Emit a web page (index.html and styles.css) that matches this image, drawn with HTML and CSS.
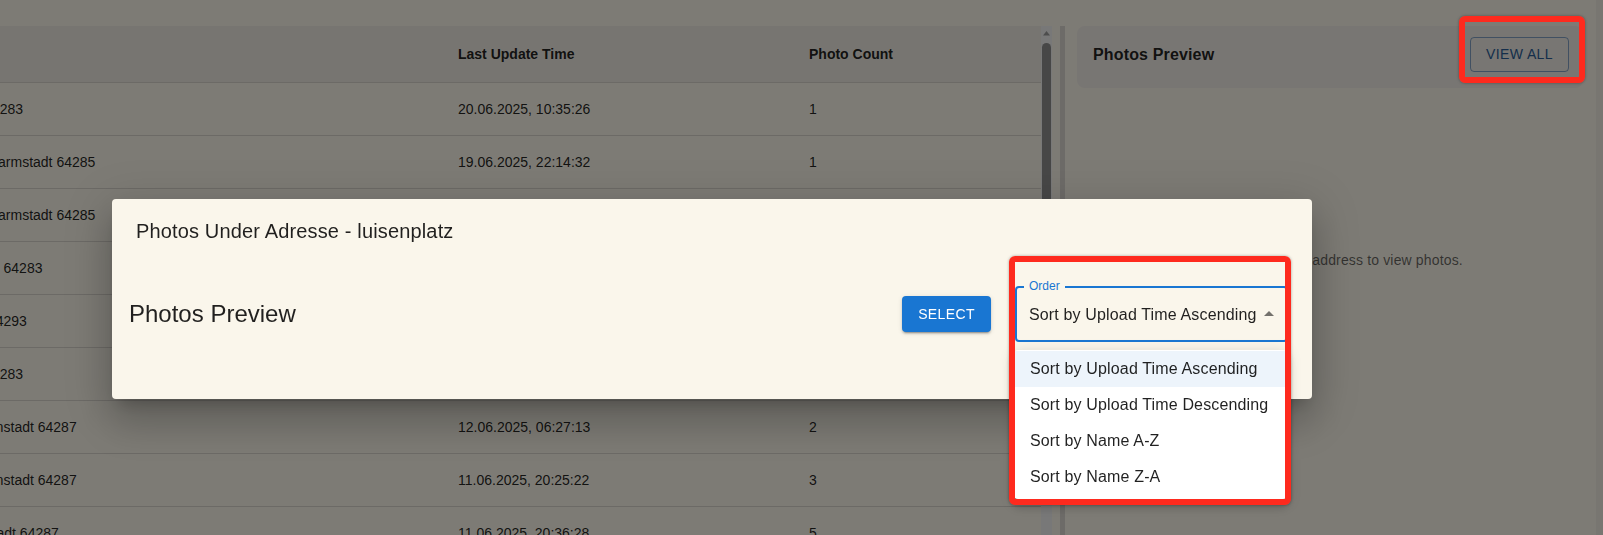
FILE: index.html
```html
<!DOCTYPE html>
<html lang="de">
<head>
<meta charset="utf-8">
<title>Photos</title>
<link rel="stylesheet" href="styles.css">
</head>
<body>
<div class="app">
  <section class="table-pane">
    <div class="table-viewport">
      <table class="addr-table">
        <thead>
          <tr><th class="c-addr">Address</th><th class="c-time">Last Update Time</th><th>Photo Count</th></tr>
        </thead>
        <tbody>
          <tr><td>Luisenplatz, Darmstadt 64283</td><td>20.06.2025, 10:35:26</td><td>1</td></tr>
          <tr><td>Heinrich-Fuhr-Straße 2, Darmstadt 64285</td><td>19.06.2025, 22:14:32</td><td>1</td></tr>
          <tr><td>Heinrich-Fuhr-Straße 4, Darmstadt 64285</td><td>18.06.2025, 16:02:47</td><td>4</td></tr>
          <tr><td>Luisenplatz 12, Darmstadt 64283</td><td>16.06.2025, 09:11:05</td><td>1</td></tr>
          <tr><td>Mainzer Str., Darmstadt 64293</td><td>14.06.2025, 13:48:50</td><td>2</td></tr>
          <tr><td>Luisenplatz, Darmstadt 64283</td><td>13.06.2025, 17:20:39</td><td>1</td></tr>
          <tr><td>Lichtenbergstraße 3, Darmstadt 64287</td><td>12.06.2025, 06:27:13</td><td>2</td></tr>
          <tr><td>Lichtenbergstraße 3, Darmstadt 64287</td><td>11.06.2025, 20:25:22</td><td>3</td></tr>
          <tr><td>Kasinostraße 1-3, Darmstadt 64287</td><td>11.06.2025, 20:36:28</td><td>5</td></tr>
        </tbody>
      </table>
    </div>
    <div class="vscroll">
      <svg class="vscroll-arrow" width="11" height="8" viewBox="0 0 11 8"><path d="M2 6.5 L5.5 2 L9 6.5 Z" fill="#9a9a9a"/></svg>
      <div class="vscroll-thumb"></div>
    </div>
  </section>
  <div class="pane-divider"></div>
  <section class="preview-pane">
    <div class="preview-card">
      <h2 class="preview-title">Photos Preview</h2>
      <button class="btn btn-outlined">View all</button>
    </div>
    <p class="empty-msg">Please select an address to view photos.</p>
  </section>
  <div class="page-scroll"></div>
</div>

<div class="backdrop"></div>

<div class="dialog" role="dialog">
  <h2 class="dialog-title">Photos Under Adresse - luisenplatz</h2>
  <div class="dialog-content">
    <div class="dialog-toolbar">
      <h3 class="dialog-subtitle">Photos Preview</h3>
      <button class="btn btn-contained">Select</button>
      <div class="select-field">
        <span class="select-label">Order</span>
        <span class="select-value">Sort by Upload Time Ascending</span>
        <svg class="select-icon" width="24" height="24" viewBox="0 0 24 24"><path d="M7 14l5-5 5 5z" fill="rgba(0,0,0,0.54)"/></svg>
      </div>
    </div>
  </div>
</div>

<ul class="menu" role="listbox">
  <li class="menu-item selected">Sort by Upload Time Ascending</li>
  <li class="menu-item">Sort by Upload Time Descending</li>
  <li class="menu-item">Sort by Name A-Z</li>
  <li class="menu-item">Sort by Name Z-A</li>
</ul>

<div class="annot annot-select"></div>
<div class="annot annot-viewall"></div>
</body>
</html>
```

FILE: styles.css
```css
* { box-sizing: border-box; }

html, body {
  margin: 0;
  padding: 0;
  width: 1603px;
  height: 535px;
  overflow: hidden;
}

body {
  background: #faf6ea;
  font-family: "Liberation Sans", Arial, sans-serif;
  color: rgba(0, 0, 0, 0.87);
  position: relative;
}

.app {
  display: flex;
  height: 535px;
  padding-top: 26px;
}

/* ---------- table ---------- */
.table-pane {
  display: flex;
  width: 1052px;
  flex: none;
}

.table-viewport {
  width: 1041px;
  overflow: hidden;
}

.addr-table {
  border-collapse: collapse;
  margin-left: -179px;
  width: 1220px;
  font-size: 14px;
  table-layout: fixed;
}

.addr-table th {
  background: #eeeae2;
  text-align: left;
  font-weight: bold;
  padding: 16px;
  line-height: 24px;
  border-bottom: 1px solid #d9d5cd;
  white-space: nowrap;
}

.addr-table th.c-addr { width: 621px; }
.addr-table th.c-time { width: 351px; }

.addr-table td {
  padding: 16px;
  line-height: 20px;
  border-bottom: 1px solid #d9d5cd;
  white-space: nowrap;
}

.vscroll {
  width: 11px;
  background: #f1f1f1;
  display: flex;
  flex-direction: column;
  align-items: center;
  padding-top: 3px;
}

.vscroll-arrow { flex: none; }

.vscroll-thumb {
  margin-top: 6px;
  width: 9px;
  height: 340px;
  border-radius: 5px;
  background: #8e8e8e;
}

.pane-divider {
  width: 5px;
  margin-left: 8px;
  background: #dad6d0;
  flex: none;
}

/* ---------- preview pane ---------- */
.preview-pane {
  width: 506px;
  margin-left: 12px;
  flex: none;
}

.preview-card {
  height: 62px;
  background: #f0ece6;
  border-radius: 8px;
  display: flex;
  align-items: center;
  justify-content: space-between;
  padding: 11px 14px 16px 16px;
}

.preview-title {
  margin: 0;
  font-size: 16px;
  font-weight: bold;
  line-height: 24px;
  letter-spacing: 0.15px;
}

.btn {
  font-family: "Liberation Sans", Arial, sans-serif;
  font-size: 14px;
  letter-spacing: 0.4px;
  text-transform: uppercase;
  border-radius: 4px;
  cursor: pointer;
}

.btn-outlined {
  background: transparent;
  color: #2a5d96;
  border: 1px solid rgba(40, 100, 170, 0.55);
  padding: 5px 15px;
  line-height: 23px;
}

.empty-msg {
  margin: 162px 0 0;
  padding-left: 6px;
  text-align: center;
  font-size: 14px;
  line-height: 20px;
  letter-spacing: 0.15px;
  color: rgba(0, 0, 0, 0.6);
}

.page-scroll {
  width: 7px;
  margin-left: auto;
  margin-top: -26px;
  background: #f0ece2;
}

/* ---------- overlay ---------- */
.backdrop {
  position: fixed;
  inset: 0;
  background: rgba(0, 0, 0, 0.5);
}

.dialog {
  position: absolute;
  left: 112px;
  top: 199px;
  width: 1200px;
  height: 200px;
  background: #faf6eb;
  border-radius: 4px;
  box-shadow: 0 11px 15px -7px rgba(0,0,0,0.2), 0 24px 38px 3px rgba(0,0,0,0.14), 0 9px 46px 8px rgba(0,0,0,0.12);
}

.dialog-title {
  margin: 0;
  padding: 16px 24px;
  font-size: 20px;
  font-weight: normal;
  line-height: 32px;
  letter-spacing: 0.15px;
}

.dialog-content {
  padding: 23px 24px 0 17px;
}

.dialog-toolbar {
  display: flex;
  align-items: center;
  height: 56px;
}

.dialog-subtitle {
  margin: 0;
  flex: 1;
  font-size: 24px;
  font-weight: normal;
  line-height: 32px;
}

.btn-contained {
  background: #1976d2;
  color: #fff;
  border: none;
  padding: 6px 16px;
  line-height: 24.5px;
  box-shadow: 0 3px 1px -2px rgba(0,0,0,0.2), 0 2px 2px 0 rgba(0,0,0,0.14), 0 1px 5px 0 rgba(0,0,0,0.12);
}

.select-field {
  position: relative;
  margin-left: 24px;
  width: 273px;
  height: 56px;
  border: 2px solid #1976d2;
  border-radius: 4px;
  display: flex;
  align-items: center;
  justify-content: space-between;
  padding: 0 5px 0 12px;
}

.select-label {
  position: absolute;
  left: 7px;
  top: -9px;
  padding: 0 5px;
  background: #faf6eb;
  font-size: 12px;
  line-height: 14px;
  color: #1976d2;
}

.select-value {
  font-size: 16px;
  line-height: 23px;
  letter-spacing: 0.15px;
}

.select-icon { flex: none; }

/* ---------- menu ---------- */
.menu {
  position: absolute;
  left: 1014px;
  top: 350px;
  width: 273px;
  margin: 0;
  padding: 1px 0 4px;
  list-style: none;
  background: #fff;
  border-radius: 4px;
  box-shadow: 0 5px 5px -3px rgba(0,0,0,0.2), 0 8px 10px 1px rgba(0,0,0,0.14), 0 3px 14px 2px rgba(0,0,0,0.12);
}

.menu-item {
  padding: 6px 16px;
  font-size: 16px;
  line-height: 24px;
  letter-spacing: 0.15px;
  white-space: nowrap;
}

.menu-item.selected {
  background: rgba(25, 118, 210, 0.08);
}

/* ---------- annotations ---------- */
.annot {
  position: absolute;
  border: 6px solid #fe2a1e;
  border-radius: 6px;
  box-shadow: 0 0 3px rgba(0,0,0,0.35);
}

.annot-select {
  left: 1009px;
  top: 256px;
  width: 282px;
  height: 249px;
}

.annot-viewall {
  left: 1459px;
  top: 16px;
  width: 126px;
  height: 67px;
}
```
